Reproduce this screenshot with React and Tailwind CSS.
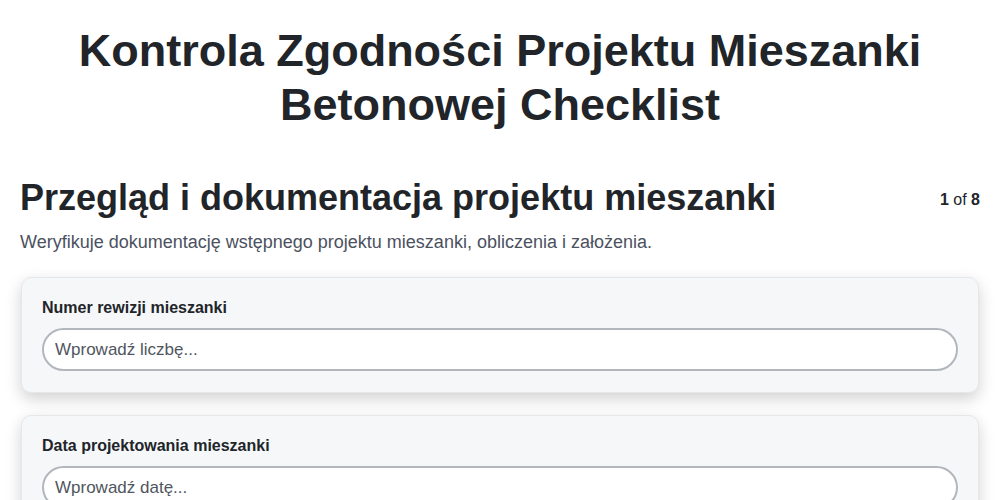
export default function App() {
  const font = { fontFamily: '"Liberation Sans", Arial, sans-serif' };
  return (
    <div className="min-h-screen bg-white text-[#212529]" style={font}>
      <div className="px-5">
        <h1 className="pt-[24px] text-center text-[45px] font-bold leading-[1.2]">
          Kontrola Zgodności Projektu Mieszanki Betonowej Checklist
        </h1>
        <div className="mt-[44px] flex items-start justify-between">
          <h2 className="text-[36px] font-bold leading-[1.2]">
            Przegląd i dokumentacja projektu mieszanki
          </h2>
          <div className="pt-[12px] text-[16px]">
            <span className="font-bold">1</span> of <span className="font-bold">8</span>
          </div>
        </div>
        <p className="mt-[10px] text-[18px] leading-[27px] text-[#4b5160]">
          Weryfikuje dokumentację wstępnego projektu mieszanki, obliczenia i założenia.
        </p>
        <div className="mx-px mt-[21px] flex flex-col gap-[22px]">
          {[
            ["Numer rewizji mieszanki", "Wprowadź liczbę..."],
            ["Data projektowania mieszanki", "Wprowadź datę..."],
          ].map(([label, ph]) => (
            <div
              key={label}
              className="rounded-[10px] border border-[#e5e7eb] bg-[#f6f7f9] px-5 pt-[18px] pb-[21px] shadow-[0_6px_16px_rgba(0,0,0,0.18)]"
            >
              <label className="block text-[16px] font-bold leading-[24px]">{label}</label>
              <input
                className="mt-[8px] block h-[43px] w-full rounded-full border-2 border-[#b2b7be] bg-white px-[11px] text-[17px] text-[#212529] placeholder:text-[#50565e] outline-none"
                placeholder={ph}
                style={font}
              />
            </div>
          ))}
        </div>
      </div>
    </div>
  );
}
